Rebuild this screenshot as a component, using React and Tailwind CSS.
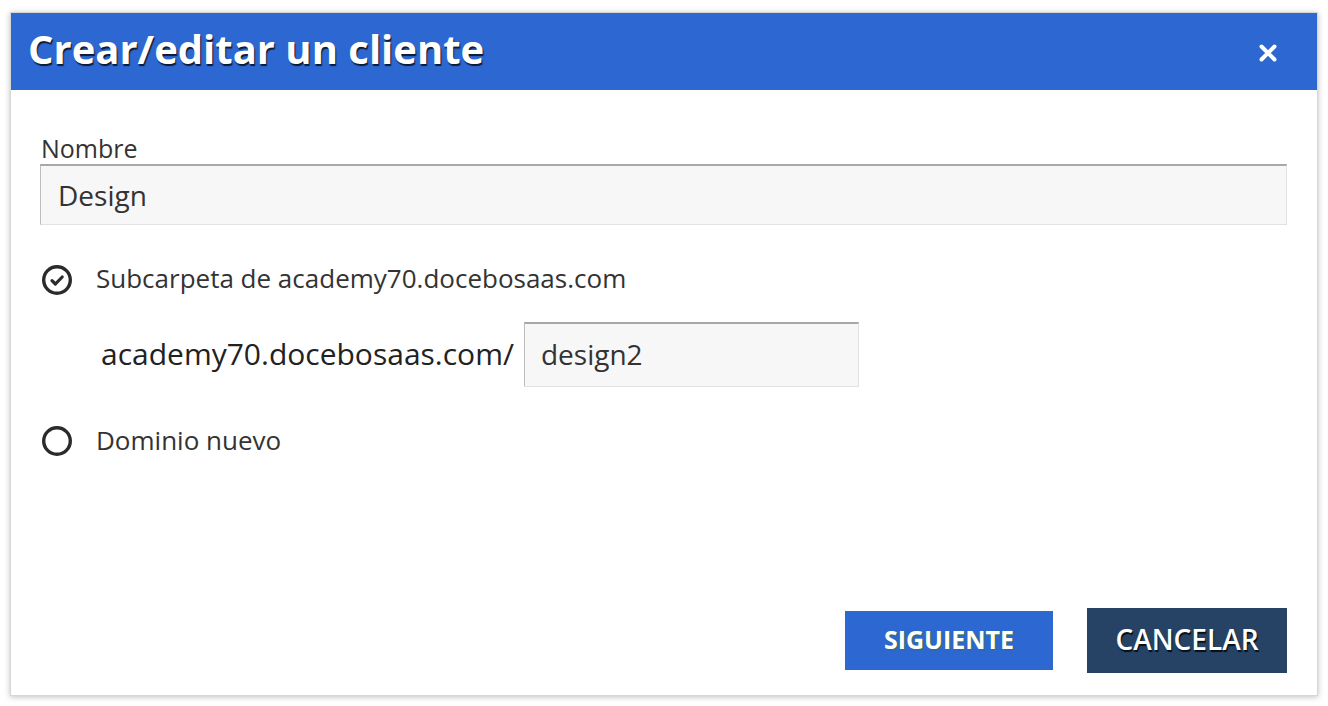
import React from 'react'

const font = { fontFamily: '"Open Sans", "Noto Sans", sans-serif' }

function CheckCircle() {
  return (
    <svg width="32" height="32" viewBox="0 0 32 32" fill="none">
      <circle cx="16" cy="16" r="13.3" stroke="#2b2b2b" strokeWidth="3.4" />
      <path d="M11 16.6l3.4 3.4 6.8-7" stroke="#2b2b2b" strokeWidth="3.2" strokeLinecap="round" strokeLinejoin="round" />
    </svg>
  )
}

function EmptyCircle() {
  return (
    <svg width="32" height="32" viewBox="0 0 32 32" fill="none">
      <circle cx="16" cy="16" r="13.3" stroke="#2b2b2b" strokeWidth="3.4" />
    </svg>
  )
}

export default function App() {
  return (
    <div className="w-[1328px] h-[706px] bg-white pt-[12px] pl-[10px]" style={font}>
      <div className="w-[1308px] h-[684px] bg-white flex flex-col border border-[#d6d6d6] shadow-[0_1px_6px_rgba(0,0,0,0.25)]">
        <div className="h-[77px] bg-[#2d67d2] flex items-center justify-between pl-[17px] pr-[39px] shrink-0">
          <h1 className="text-white text-[40px] font-bold tracking-[0px] [text-shadow:1px_2px_1px_rgba(0,0,0,0.75)] leading-none pb-[6px]">
            Crear/editar un cliente
          </h1>
          <svg width="20" height="20" viewBox="0 0 20 20" className="mt-[3px]">
            <path d="M3.5 3.5l13 13M16.5 3.5l-13 13" stroke="white" strokeWidth="4" strokeLinecap="round" />
          </svg>
        </div>

        <div className="flex-1 flex flex-col pl-[29px] pr-[30px] pt-[46px]">
          <label className="text-[25px] text-[#333] leading-none pl-[1px]">Nombre</label>
          <div className="mt-[3px] h-[61px] bg-[#f7f7f7] border border-[#e2e2e2] border-t-[#a8a8a8] border-l-[#bdbdbd] border-t-2 flex items-center pl-[17px] text-[28px] text-[#333] leading-none pb-[1px]">
            Design
          </div>

          <div className="mt-[39px] flex items-center gap-[23px] pl-[1px]">
            <CheckCircle />
            <span className="text-[26px] text-[#333] leading-none pb-[4px]">Subcarpeta de academy70.docebosaas.com</span>
          </div>

          <div className="mt-[26px] flex items-center pl-[61px]">
            <span className="text-[30px] text-[#222] leading-none pb-[2px]">academy70.docebosaas.com/</span>
            <div className="ml-[10px] w-[335px] h-[65px] bg-[#f7f7f7] border border-[#e2e2e2] border-t-[#a8a8a8] border-l-[#bdbdbd] border-t-2 flex items-center pl-[16px] text-[28px] text-[#333] leading-none pb-[2px]">
              design2
            </div>
          </div>

          <div className="mt-[38px] flex items-center gap-[23px] pl-[1px]">
            <EmptyCircle />
            <span className="text-[26px] text-[#333] leading-none pb-[3px]">Dominio nuevo</span>
          </div>

          <div className="mt-auto mb-[22px] flex items-center justify-end gap-[34px]">
            <button className="w-[208px] h-[59px] bg-[#2d67d2] text-white text-[25px] font-bold leading-none pb-[2px] [text-shadow:1px_1px_1px_rgba(60,120,40,0.8)]">
              SIGUIENTE
            </button>
            <button className="w-[200px] h-[65px] bg-[#264366] text-white text-[28px] font-semibold leading-none pb-[4px] [text-shadow:1px_2px_1px_rgba(0,0,0,0.8)]">
              CANCELAR
            </button>
          </div>
        </div>
      </div>
    </div>
  )
}
